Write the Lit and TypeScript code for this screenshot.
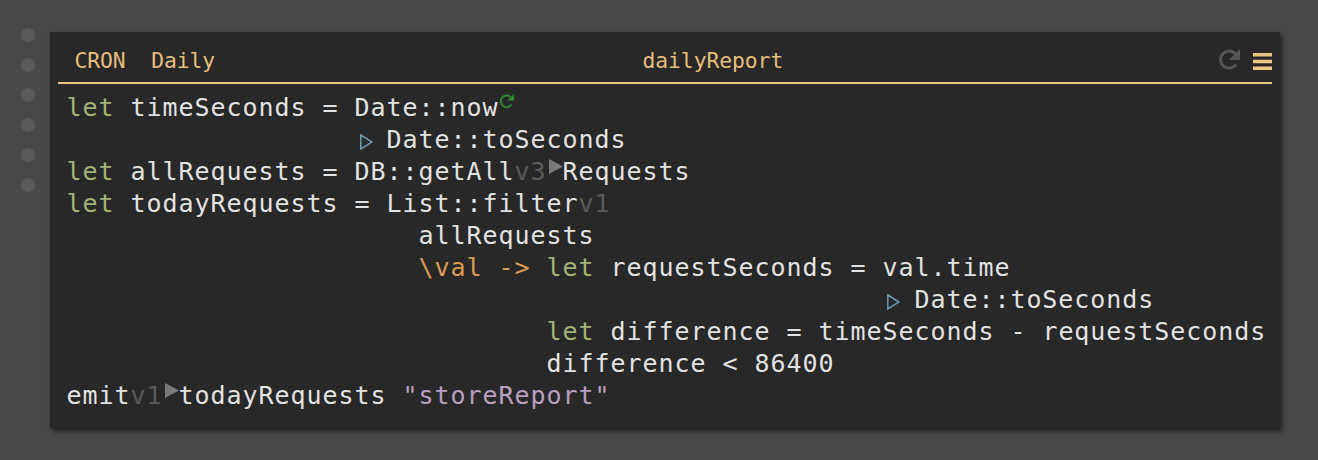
import { LitElement, html, css } from "lit";
import { customElement } from "lit/decorators.js";

const sp = (n: number) => " ".repeat(n);

@customElement("app-root")
export class AppRoot extends LitElement {
  static styles = css`
    :host { display: block; width: 1318px; height: 460px; overflow: hidden; background: #484848; }
    .page { display: flex; align-items: flex-start; height: 460px; box-sizing: border-box; padding: 32px 0 0 21px; }
    .dots { display: flex; flex-direction: column; gap: 16px; margin-top: -4px; width: 29px; }
    .dot { width: 14px; height: 14px; border-radius: 50%; background: #5a5a5a; }
    .panel { width: 1230px; height: 396px; box-sizing: border-box; background: #282828; padding: 0 8px;
      box-shadow: 2px 3px 5px rgba(0,0,0,.6); }
    .head { display: flex; justify-content: space-between; align-items: center; box-sizing: border-box;
      padding: 8px 0 0 16.5px; border-bottom: 2px solid #edc582; height: 52px;
      font: 21.33px/1 "DejaVu Sans Mono", monospace; letter-spacing: -0.05px; color: #e5bf7d; }
    .left { display: flex; gap: 25.5px; }
    .title { margin-right: 8.5px; }
    .tools { display: flex; align-items: center; gap: 12px; }
    .tools svg { display: block; }
    .reload { margin-bottom: 3px; }
    .code { padding: 8px 0 0 8.6px; font: 25px/32px "DejaVu Sans Mono", monospace; letter-spacing: 0.945px; color: #e2e2e2; }
    .line { height: 32px; white-space: pre; }
    .kw { color: #a3b375; }
    .lam { color: #dd9a55; }
    .str { color: #b9a0c0; }
    .ver { color: #5a5a5a; }
    .cell { display: inline-block; width: 16px; height: 32px; vertical-align: top; position: relative; }
    .cell svg { position: absolute; left: 0; top: 0; overflow: visible; }
  `;

  private run() {
    return html`<span class="cell"><svg width="16" height="32" viewBox="0 0 16 32"><path d="M2 3 16 10.500 2 18Z" fill="#7a7a7a"/></svg></span>`;
  }
  private pipe() {
    return html`<span class="cell"><svg width="18" height="32" viewBox="0 0 18 32"><path d="M5.800 11 17 18 5.800 25Z" fill="none" stroke="#6b9ab5" stroke-width="1.500"/></svg></span>`;
  }

  render() {
    return html`<div class="page">
      <div class="dots">${[0,1,2,3,4,5].map(() => html`<div class="dot"></div>`)}</div>
      <div class="panel">
        <div class="head">
          <div class="left"><span>CRON</span><span>Daily</span></div>
          <div class="title">dailyReport</div>
          <div class="tools">
            <svg class="reload" width="22" height="22" viewBox="0 0 22 22"><path d="M16.500 5A8.500 8.500 0 1 0 17 15.500" fill="none" stroke="#555" stroke-width="3"/><path d="M21 0v11H10Z" fill="#555"/></svg>
            <svg width="19" height="17" viewBox="0 0 19 17"><path d="M0 0h19v3.500H0ZM0 6.700h19v3.500H0ZM0 13.500h19v3.500H0Z" fill="#edc582"/></svg>
          </div>
        </div>
        <div class="code"><div class="line"><span class="kw">let</span> timeSeconds = Date::now<span class="cell"><svg width="16" height="32" viewBox="0 0 16 32"><path d="M11.500 5A5.800 5.800 0 1 0 12.500 12.500" fill="none" stroke="#2f8a2f" stroke-width="2"/><path d="M15 2v6.500H8.500Z" fill="#2f8a2f"/></svg></span></div><div class="line">${sp(18)}${this.pipe()} Date::toSeconds</div><div class="line"><span class="kw">let</span> allRequests = DB::getAll<span class="ver">v3</span>${this.run()}Requests</div><div class="line"><span class="kw">let</span> todayRequests = List::filter<span class="ver">v1</span></div><div class="line">${sp(22)}allRequests</div><div class="line">${sp(22)}<span class="lam">\\val -> </span><span class="kw">let</span> requestSeconds = val.time</div><div class="line">${sp(51)}${this.pipe()} Date::toSeconds</div><div class="line">${sp(30)}<span class="kw">let</span> difference = timeSeconds - requestSeconds</div><div class="line">${sp(30)}difference < 86400</div><div class="line">emit<span class="ver">v1</span>${this.run()}todayRequests <span class="str">"storeReport"</span></div></div>
      </div>
    </div>`;
  }
}
